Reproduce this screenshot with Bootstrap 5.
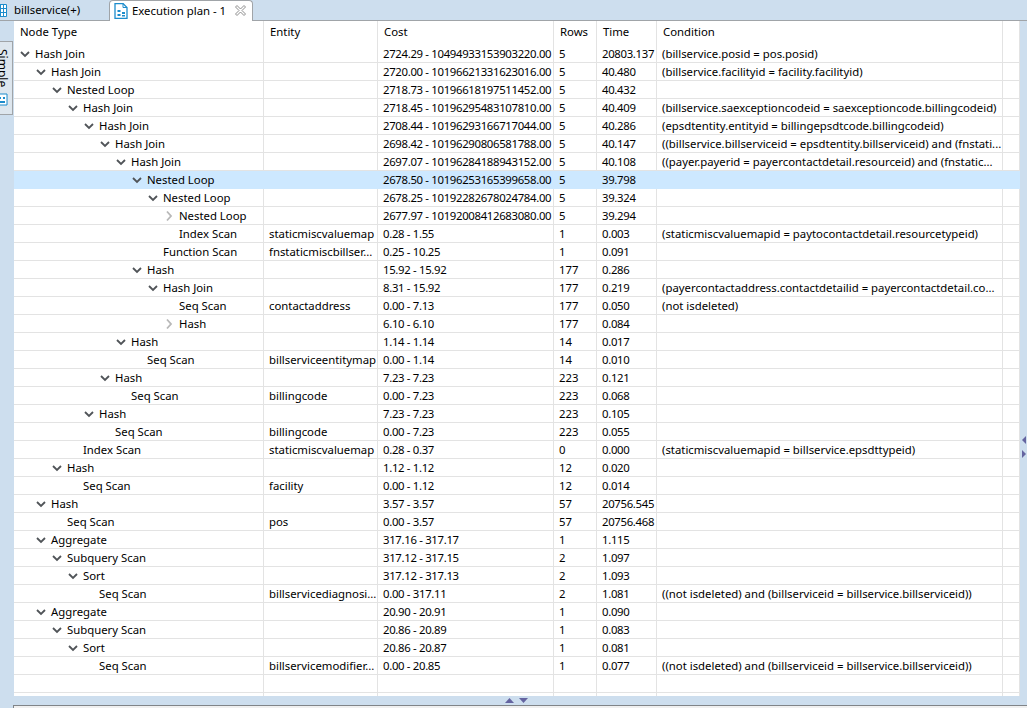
<!DOCTYPE html>
<html lang="en">
<head>
<meta charset="utf-8">
<title>Execution plan</title>
<link rel="stylesheet" href="https://cdn.jsdelivr.net/npm/bootstrap@5.3.0/dist/css/bootstrap.min.css">
<style>
html,body{height:708px;overflow:hidden}
body{background:#cddeee;font-family:"Noto Sans","Open Sans",sans-serif;font-size:11.35px;color:#000;line-height:18px}
.tab-strip{height:21px;border-bottom:1px solid #a0a4a8;overflow:visible}
.doc-tab{height:21px;white-space:nowrap}
.doc-tab-off{width:109px;padding-left:14px;position:relative;overflow:hidden;line-height:20px}
.doc-tab-off svg{position:absolute;left:-3px;top:4px}
.doc-tab-on{width:144px;height:22px;background:#fff;border:1px solid #a0a4a8;border-bottom:0;border-radius:4px 4px 0 0;padding:0 0 2px 4px;line-height:20px;gap:4px}
.doc-tab-on .tab-title{flex:1}
.doc-tab-on .tab-close{margin-right:6px}
.mid-area{height:675px}
.side-rail{width:14px;flex:none}
.side-tab{width:13px;height:74px;margin-top:20px;background:#dde6ee;border:1px solid #a0a4a8;border-left:0;overflow:hidden;position:relative}
.side-label{writing-mode:vertical-rl;line-height:12px;font-size:12px;position:absolute;left:-4px;top:7px}
.side-tab svg{position:absolute;left:-4px;top:51px}
.grid-wrap{width:1006px;flex:none;background:#fff;overflow:hidden;height:675px}
.plan-grid{table-layout:fixed;width:1006px;margin:0;border-collapse:separate;border-spacing:0}
.plan-grid th,.plan-grid td{padding:1px 0 0 5px;height:18px;line-height:16px;font-weight:400;white-space:nowrap;overflow:hidden;color:#000;background:#fff;border-bottom:1px solid #e3e3e3;border-right:1px solid #e3e3e3;box-shadow:none;vertical-align:middle}
.plan-grid th{height:24px;padding:0 0 2px 6px;border-bottom:0}
.plan-grid tr.is-sel td{background:#cde8ff;border-color:#cde8ff}
.plan-grid td.node-cell{padding-left:0}
.plan-grid td.num-cell{letter-spacing:-.32px}
.cw0{width:250px}.cw1{width:114px}.cw2{width:176px}.cw3{width:43px}.cw4{width:60px}.cw5{width:346px}.cw6{width:17px}
.lv0{margin-left:6px}.lv1{margin-left:22px}.lv2{margin-left:38px}.lv3{margin-left:54px}.lv4{margin-left:70px}.lv5{margin-left:86px}.lv6{margin-left:102px}.lv7{margin-left:118px}.lv8{margin-left:134px}.lv9{margin-left:150px}
.node-wrap{display:flex;align-items:center;height:16px}
.twist{width:15px;height:16px;flex:none}
.sash{height:9px;gap:5px;padding:2px 0 0 505px;width:100%}
.bottom-pane{height:3px;margin-left:13px;background:#f0f0f0;border-top:1px solid #808488;border-left:1px solid #808488}
.right-handle{position:absolute;left:1022px;top:436px}
</style>
</head>
<body class="position-relative">
<svg width="0" height="0" class="position-absolute">
<symbol id="tw-open" viewBox="0 0 15 16"><path d="M1 6l4 4 4-4" fill="none" stroke="#505458" stroke-width="1.800"/></symbol>
<symbol id="tw-shut" viewBox="0 0 15 16"><path d="M3 3.500l4 4.500-4 4.500" fill="none" stroke="#b8b8b8" stroke-width="1.800"/></symbol>
<symbol id="ic-plan" viewBox="0 0 14 16"><path d="M1 .5h8l4 4v11H1z" fill="#fff" stroke="#1c8ccc" stroke-width="1.300"/><path d="M9 .5v4h4" fill="none" stroke="#1c8ccc"/><path d="M3.500 7h3v2h-3zM3.500 11h3v2h-3zM8 9h3v2H8zM8 12h3v1.500H8z" fill="#1c8ccc"/></symbol>
</svg>

<div class="tab-strip d-flex">
  <div class="doc-tab doc-tab-off">
    <svg width="10" height="13" viewBox="0 0 10 13"><path d="M.5 .5h9v12h-9zM.5 4.500h9M.5 8.500h9M3.500 .5v12M6.500 .5v12" fill="#fff" stroke="#1c8ccc"/></svg>
    billservice(+)
  </div>
  <div class="doc-tab doc-tab-on d-flex align-items-center">
    <svg width="14" height="16" aria-hidden="true"><use href="#ic-plan"/></svg>
    <span class="tab-title">Execution plan - 1</span>
    <svg class="tab-close" width="11" height="11" viewBox="0 0 11 11"><path d="M.5 2l1.500-1.500L5.500 4 9 .5 10.500 2 7 5.500l3.500 3.500L9 10.500 5.500 7 2 10.500.5 9 4 5.500z" fill="#fff" stroke="#8c8c8c"/></svg>
  </div>
</div>

<div class="mid-area d-flex">
  <div class="side-rail">
    <div class="side-tab">
      <span class="side-label">Simple</span>
      <svg width="13" height="13" viewBox="0 0 13 13"><path d="M1 1h10v11H1z" fill="#fff" stroke="#1c8ccc"/><path d="M3 4h2v2H3zM7 4h2v2H7zM3 8h6v2H3z" fill="#1c8ccc"/></svg>
    </div>
  </div>
  <div class="grid-wrap">
    <table class="table plan-grid">
      <colgroup><col class="cw0"><col class="cw1"><col class="cw2"><col class="cw3"><col class="cw4"><col class="cw5"><col class="cw6"></colgroup>
      <thead><tr><th>Node Type</th><th>Entity</th><th>Cost</th><th>Rows</th><th>Time</th><th>Condition</th><th></th></tr></thead>
      <tbody>
<tr><td class="node-cell"><div class="node-wrap lv0"><svg class="twist"><use href="#tw-open"/></svg>Hash Join</div></td><td></td><td class="num-cell">2724.29 - 10494933153903220.00</td><td>5</td><td class="num-cell">20803.137</td><td>(billservice.posid = pos.posid)</td><td></td></tr>
<tr><td class="node-cell"><div class="node-wrap lv1"><svg class="twist"><use href="#tw-open"/></svg>Hash Join</div></td><td></td><td class="num-cell">2720.00 - 10196621331623016.00</td><td>5</td><td class="num-cell">40.480</td><td>(billservice.facilityid = facility.facilityid)</td><td></td></tr>
<tr><td class="node-cell"><div class="node-wrap lv2"><svg class="twist"><use href="#tw-open"/></svg>Nested Loop</div></td><td></td><td class="num-cell">2718.73 - 10196618197511452.00</td><td>5</td><td class="num-cell">40.432</td><td></td><td></td></tr>
<tr><td class="node-cell"><div class="node-wrap lv3"><svg class="twist"><use href="#tw-open"/></svg>Hash Join</div></td><td></td><td class="num-cell">2718.45 - 10196295483107810.00</td><td>5</td><td class="num-cell">40.409</td><td>(billservice.saexceptioncodeid = saexceptioncode.billingcodeid)</td><td></td></tr>
<tr><td class="node-cell"><div class="node-wrap lv4"><svg class="twist"><use href="#tw-open"/></svg>Hash Join</div></td><td></td><td class="num-cell">2708.44 - 10196293166717044.00</td><td>5</td><td class="num-cell">40.286</td><td>(epsdtentity.entityid = billingepsdtcode.billingcodeid)</td><td></td></tr>
<tr><td class="node-cell"><div class="node-wrap lv5"><svg class="twist"><use href="#tw-open"/></svg>Hash Join</div></td><td></td><td class="num-cell">2698.42 - 10196290806581788.00</td><td>5</td><td class="num-cell">40.147</td><td>((billservice.billserviceid = epsdtentity.billserviceid) and (fnstati...</td><td></td></tr>
<tr><td class="node-cell"><div class="node-wrap lv6"><svg class="twist"><use href="#tw-open"/></svg>Hash Join</div></td><td></td><td class="num-cell">2697.07 - 10196284188943152.00</td><td>5</td><td class="num-cell">40.108</td><td>((payer.payerid = payercontactdetail.resourceid) and (fnstatic...</td><td></td></tr>
<tr class="is-sel"><td class="node-cell"><div class="node-wrap lv7"><svg class="twist"><use href="#tw-open"/></svg>Nested Loop</div></td><td></td><td class="num-cell">2678.50 - 10196253165399658.00</td><td>5</td><td class="num-cell">39.798</td><td></td><td></td></tr>
<tr><td class="node-cell"><div class="node-wrap lv8"><svg class="twist"><use href="#tw-open"/></svg>Nested Loop</div></td><td></td><td class="num-cell">2678.25 - 10192282678024784.00</td><td>5</td><td class="num-cell">39.324</td><td></td><td></td></tr>
<tr><td class="node-cell"><div class="node-wrap lv9"><svg class="twist"><use href="#tw-shut"/></svg>Nested Loop</div></td><td></td><td class="num-cell">2677.97 - 10192008412683080.00</td><td>5</td><td class="num-cell">39.294</td><td></td><td></td></tr>
<tr><td class="node-cell"><div class="node-wrap lv9"><span class="twist"></span>Index Scan</div></td><td>staticmiscvaluemap</td><td class="num-cell">0.28 - 1.55</td><td>1</td><td class="num-cell">0.003</td><td>(staticmiscvaluemapid = paytocontactdetail.resourcetypeid)</td><td></td></tr>
<tr><td class="node-cell"><div class="node-wrap lv8"><span class="twist"></span>Function Scan</div></td><td>fnstaticmiscbillser...</td><td class="num-cell">0.25 - 10.25</td><td>1</td><td class="num-cell">0.091</td><td></td><td></td></tr>
<tr><td class="node-cell"><div class="node-wrap lv7"><svg class="twist"><use href="#tw-open"/></svg>Hash</div></td><td></td><td class="num-cell">15.92 - 15.92</td><td>177</td><td class="num-cell">0.286</td><td></td><td></td></tr>
<tr><td class="node-cell"><div class="node-wrap lv8"><svg class="twist"><use href="#tw-open"/></svg>Hash Join</div></td><td></td><td class="num-cell">8.31 - 15.92</td><td>177</td><td class="num-cell">0.219</td><td>(payercontactaddress.contactdetailid = payercontactdetail.co...</td><td></td></tr>
<tr><td class="node-cell"><div class="node-wrap lv9"><span class="twist"></span>Seq Scan</div></td><td>contactaddress</td><td class="num-cell">0.00 - 7.13</td><td>177</td><td class="num-cell">0.050</td><td>(not isdeleted)</td><td></td></tr>
<tr><td class="node-cell"><div class="node-wrap lv9"><svg class="twist"><use href="#tw-shut"/></svg>Hash</div></td><td></td><td class="num-cell">6.10 - 6.10</td><td>177</td><td class="num-cell">0.084</td><td></td><td></td></tr>
<tr><td class="node-cell"><div class="node-wrap lv6"><svg class="twist"><use href="#tw-open"/></svg>Hash</div></td><td></td><td class="num-cell">1.14 - 1.14</td><td>14</td><td class="num-cell">0.017</td><td></td><td></td></tr>
<tr><td class="node-cell"><div class="node-wrap lv7"><span class="twist"></span>Seq Scan</div></td><td>billserviceentitymap</td><td class="num-cell">0.00 - 1.14</td><td>14</td><td class="num-cell">0.010</td><td></td><td></td></tr>
<tr><td class="node-cell"><div class="node-wrap lv5"><svg class="twist"><use href="#tw-open"/></svg>Hash</div></td><td></td><td class="num-cell">7.23 - 7.23</td><td>223</td><td class="num-cell">0.121</td><td></td><td></td></tr>
<tr><td class="node-cell"><div class="node-wrap lv6"><span class="twist"></span>Seq Scan</div></td><td>billingcode</td><td class="num-cell">0.00 - 7.23</td><td>223</td><td class="num-cell">0.068</td><td></td><td></td></tr>
<tr><td class="node-cell"><div class="node-wrap lv4"><svg class="twist"><use href="#tw-open"/></svg>Hash</div></td><td></td><td class="num-cell">7.23 - 7.23</td><td>223</td><td class="num-cell">0.105</td><td></td><td></td></tr>
<tr><td class="node-cell"><div class="node-wrap lv5"><span class="twist"></span>Seq Scan</div></td><td>billingcode</td><td class="num-cell">0.00 - 7.23</td><td>223</td><td class="num-cell">0.055</td><td></td><td></td></tr>
<tr><td class="node-cell"><div class="node-wrap lv3"><span class="twist"></span>Index Scan</div></td><td>staticmiscvaluemap</td><td class="num-cell">0.28 - 0.37</td><td>0</td><td class="num-cell">0.000</td><td>(staticmiscvaluemapid = billservice.epsdttypeid)</td><td></td></tr>
<tr><td class="node-cell"><div class="node-wrap lv2"><svg class="twist"><use href="#tw-open"/></svg>Hash</div></td><td></td><td class="num-cell">1.12 - 1.12</td><td>12</td><td class="num-cell">0.020</td><td></td><td></td></tr>
<tr><td class="node-cell"><div class="node-wrap lv3"><span class="twist"></span>Seq Scan</div></td><td>facility</td><td class="num-cell">0.00 - 1.12</td><td>12</td><td class="num-cell">0.014</td><td></td><td></td></tr>
<tr><td class="node-cell"><div class="node-wrap lv1"><svg class="twist"><use href="#tw-open"/></svg>Hash</div></td><td></td><td class="num-cell">3.57 - 3.57</td><td>57</td><td class="num-cell">20756.545</td><td></td><td></td></tr>
<tr><td class="node-cell"><div class="node-wrap lv2"><span class="twist"></span>Seq Scan</div></td><td>pos</td><td class="num-cell">0.00 - 3.57</td><td>57</td><td class="num-cell">20756.468</td><td></td><td></td></tr>
<tr><td class="node-cell"><div class="node-wrap lv1"><svg class="twist"><use href="#tw-open"/></svg>Aggregate</div></td><td></td><td class="num-cell">317.16 - 317.17</td><td>1</td><td class="num-cell">1.115</td><td></td><td></td></tr>
<tr><td class="node-cell"><div class="node-wrap lv2"><svg class="twist"><use href="#tw-open"/></svg>Subquery Scan</div></td><td></td><td class="num-cell">317.12 - 317.15</td><td>2</td><td class="num-cell">1.097</td><td></td><td></td></tr>
<tr><td class="node-cell"><div class="node-wrap lv3"><svg class="twist"><use href="#tw-open"/></svg>Sort</div></td><td></td><td class="num-cell">317.12 - 317.13</td><td>2</td><td class="num-cell">1.093</td><td></td><td></td></tr>
<tr><td class="node-cell"><div class="node-wrap lv4"><span class="twist"></span>Seq Scan</div></td><td>billservicediagnosi...</td><td class="num-cell">0.00 - 317.11</td><td>2</td><td class="num-cell">1.081</td><td>((not isdeleted) and (billserviceid = billservice.billserviceid))</td><td></td></tr>
<tr><td class="node-cell"><div class="node-wrap lv1"><svg class="twist"><use href="#tw-open"/></svg>Aggregate</div></td><td></td><td class="num-cell">20.90 - 20.91</td><td>1</td><td class="num-cell">0.090</td><td></td><td></td></tr>
<tr><td class="node-cell"><div class="node-wrap lv2"><svg class="twist"><use href="#tw-open"/></svg>Subquery Scan</div></td><td></td><td class="num-cell">20.86 - 20.89</td><td>1</td><td class="num-cell">0.083</td><td></td><td></td></tr>
<tr><td class="node-cell"><div class="node-wrap lv3"><svg class="twist"><use href="#tw-open"/></svg>Sort</div></td><td></td><td class="num-cell">20.86 - 20.87</td><td>1</td><td class="num-cell">0.081</td><td></td><td></td></tr>
<tr><td class="node-cell"><div class="node-wrap lv4"><span class="twist"></span>Seq Scan</div></td><td>billservicemodifier...</td><td class="num-cell">0.00 - 20.85</td><td>1</td><td class="num-cell">0.077</td><td>((not isdeleted) and (billserviceid = billservice.billserviceid))</td><td></td></tr>
<tr><td></td><td></td><td></td><td></td><td></td><td></td><td></td></tr>
<tr><td></td><td></td><td></td><td></td><td></td><td></td><td></td></tr>
      </tbody>
    </table>
  </div>
</div>

<div class="sash d-flex">
  <svg width="9" height="5" viewBox="0 0 9 5"><path d="M4.500 0L9 5H0z" fill="#6464a0"/></svg>
  <svg width="9" height="5" viewBox="0 0 9 5"><path d="M4.500 5L0 0h9z" fill="#6464a0"/></svg>
</div>
<div class="bottom-pane"></div>

<svg class="right-handle" width="5" height="22" viewBox="0 0 5 22"><path d="M4 0v8L0 4zM0 14l4 4-4 4z" fill="#6464a0"/></svg>
</body>
</html>
